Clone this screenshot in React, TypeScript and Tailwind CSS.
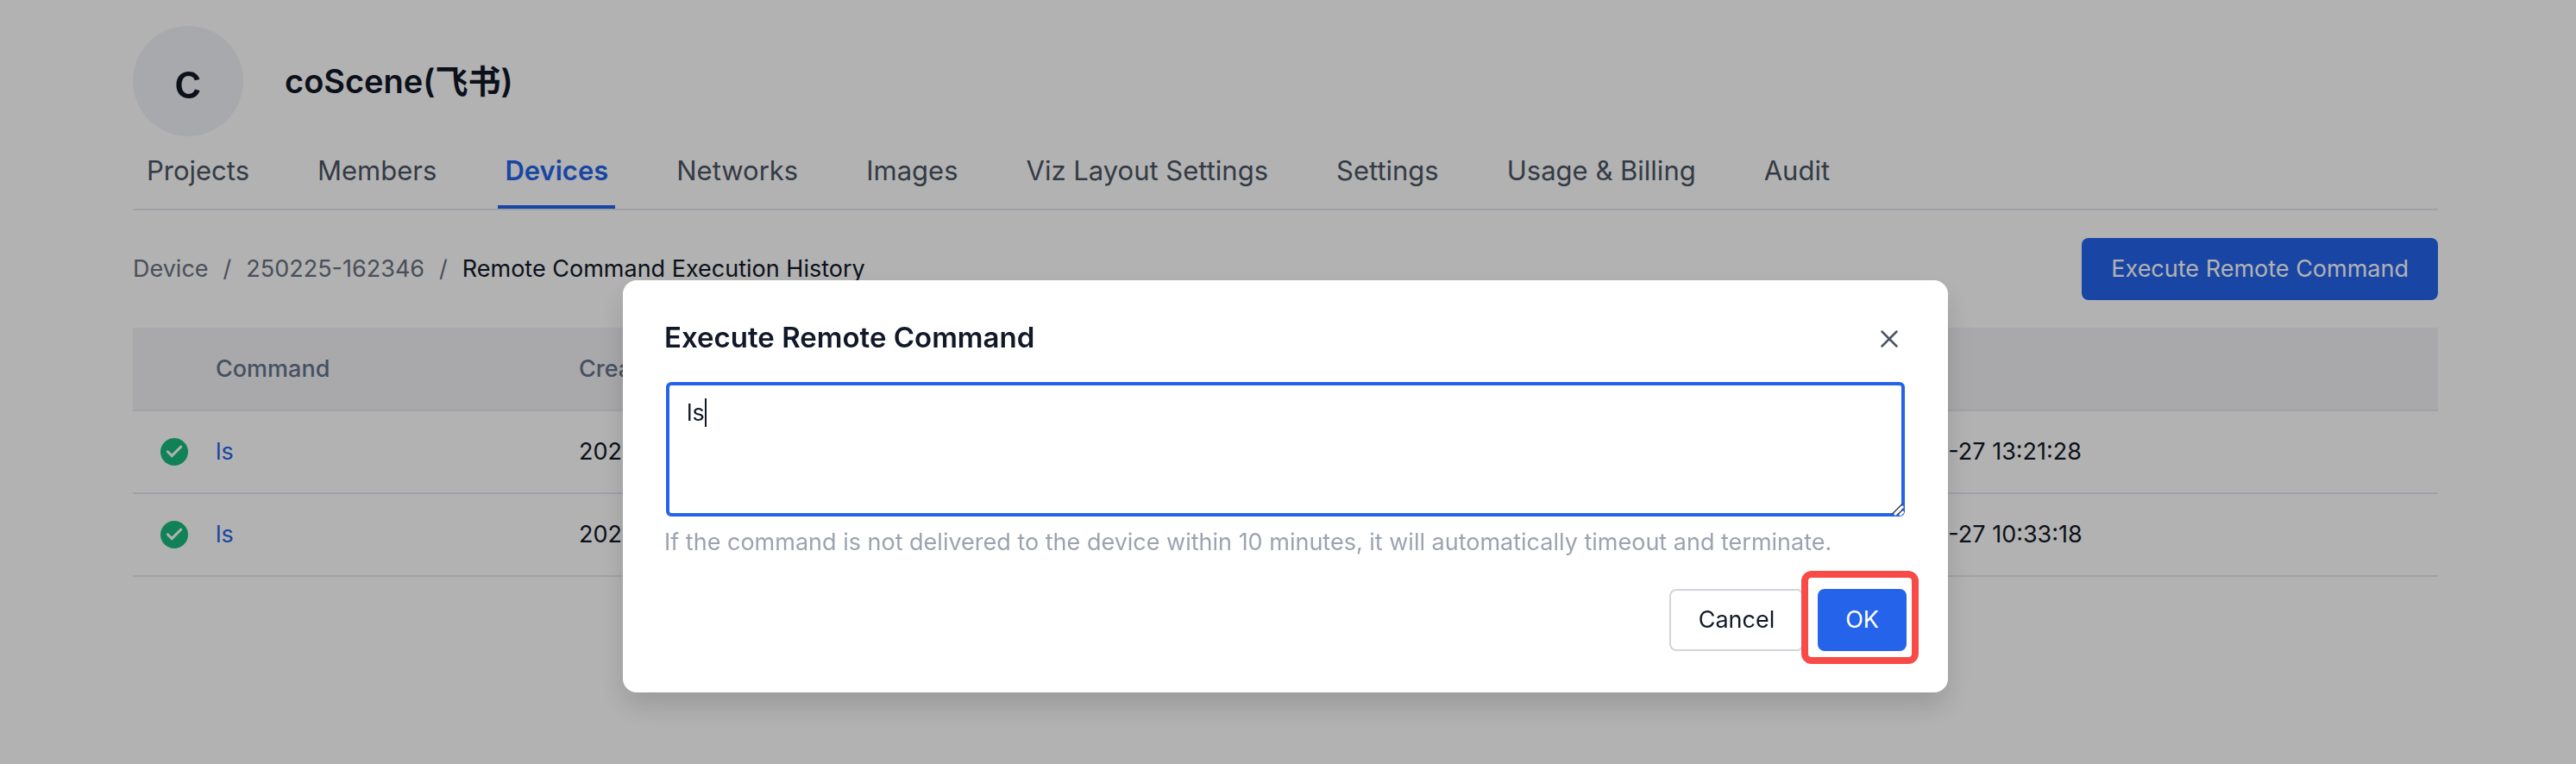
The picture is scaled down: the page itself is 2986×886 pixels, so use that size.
import React from "react";

const tabs = [
  "Projects",
  "Members",
  "Devices",
  "Networks",
  "Images",
  "Viz Layout Settings",
  "Settings",
  "Usage & Billing",
  "Audit",
];

const rows = [
  { command: "ls", created: "2025-02-27 13:21:26", ended: "2025-02-27 13:21:28" },
  { command: "ls", created: "2025-02-27 10:33:16", ended: "2025-02-27 10:33:18" },
];

function SuccessIcon() {
  return (
    <svg viewBox="0 0 32 32" className="block size-8" role="img" aria-label="Succeeded">
      <circle cx="16" cy="16" r="16" fill="#19bb7e" />
      <path
        d="M8.4 15.8 13.3 20.6 23.8 10"
        fill="none"
        stroke="#fff"
        strokeWidth="3"
        strokeLinecap="round"
        strokeLinejoin="miter"
      />
    </svg>
  );
}

function Header() {
  return (
    <header>
      <div className="flex items-center gap-12">
        <div className="flex size-32 items-center justify-center rounded-full bg-[#f1f2f6] text-[56px] leading-none font-medium">
          c
        </div>
        <h1 className="text-[38px] leading-[56px] font-semibold">coScene(飞书)</h1>
      </div>
      <nav className="flex gap-[63px] border-b-2 border-slate-200 pl-2">
        {tabs.map((tab) => (
          <a
            key={tab}
            href="#"
            className={
              tab === "Devices"
                ? "border-b-4 border-[#2563eb] px-2 py-4 text-[31px] leading-[48px] font-semibold text-[#2563eb]"
                : "border-b-4 border-transparent px-2 py-4 text-[31px] leading-[48px] text-[#4b5563]"
            }
          >
            {tab}
          </a>
        ))}
      </nav>
    </header>
  );
}

function Toolbar() {
  return (
    <div className="flex items-center justify-between py-8 text-[27px] leading-[44px]">
      <nav aria-label="Breadcrumb" className="flex gap-[17px] text-[#6b7280]">
        <a href="#">Device</a>
        <span>/</span>
        <a href="#">250225-162346</a>
        <span>/</span>
        <span className="text-[#111827]">Remote Command Execution History</span>
      </nav>
      <button className="h-[72px] rounded-lg bg-[#2563eb] px-[34px] text-white">Execute Remote Command</button>
    </div>
  );
}

function HistoryTable() {
  return (
    <table className="w-full table-fixed text-left text-[27px] leading-[44px]">
      <thead>
        <tr className="h-24 border-b-2 border-slate-200 bg-[#f2f2f5] text-[#64748b]">
          <th className="w-24" />
          <th className="w-[421px] font-medium">Command</th>
          <th className="font-medium">Created</th>
          <th className="w-[680px] font-medium">Ended</th>
        </tr>
      </thead>
      <tbody>
        {rows.map((row) => (
          <tr key={row.ended} className="h-24 border-b-2 border-slate-200">
            <td className="pl-8">
              <SuccessIcon />
            </td>
            <td>
              <a href="#" className="text-[#2563eb]">
                {row.command}
              </a>
            </td>
            <td>{row.created}</td>
            <td>{row.ended}</td>
          </tr>
        ))}
      </tbody>
    </table>
  );
}

function CommandDialog() {
  return (
    <div className="fixed inset-0 flex items-start justify-center bg-black/30 pt-[325px] pr-[6px]">
      <section
        role="dialog"
        aria-modal="true"
        aria-labelledby="dialog-title"
        className="w-full max-w-[1536px] rounded-2xl bg-white p-12 shadow-[0_16px_32px_rgba(0,0,0,0.14)]"
      >
        <div className="flex h-10 items-start justify-between">
          <h2 id="dialog-title" className="text-[33px] leading-9 font-semibold">
            Execute Remote Command
          </h2>
          <button aria-label="Close" className="text-[#4b5563]">
            <svg viewBox="0 0 40 40" className="block size-10" fill="none" stroke="currentColor">
              <path d="M11.5 11.5 28.5 28.5M28.5 11.5 11.5 28.5" strokeWidth="2.5" strokeLinecap="round" />
            </svg>
          </button>
        </div>
        <div className="relative mx-[2px] mt-[30px]">
          <textarea
            aria-label="Command"
            aria-describedby="command-hint"
            defaultValue="ls"
            className="block h-[156px] w-full resize-none rounded-md border-4 border-[#2563eb] px-5 py-3 text-[27px] leading-[40px] outline-none"
          />
          <span className="absolute top-[19px] left-[45px] h-[33px] w-[2px] bg-[#111827]" />
          <svg viewBox="0 0 16 16" className="absolute right-[1px] bottom-[1px] size-4" fill="none">
            <path d="M5 15 15 5M11 15.5 15.5 11" stroke="#fff" strokeWidth="3" />
            <path d="M2 14.5 14.5 2M9 14.5 14.5 9" stroke="#374151" strokeWidth="1.5" />
          </svg>
        </div>
        <p id="command-hint" className="mt-2 text-[27px] leading-[44px] text-[#9ca3af]">
          If the command is not delivered to the device within 10 minutes, it will automatically timeout and terminate.
        </p>
        <div className="mt-8 flex justify-end gap-4 text-[27px] leading-[44px]">
          <button className="h-[72px] rounded-lg border-2 border-[#d1d5db] px-8">Cancel</button>
          <div className="relative">
            <button className="h-[72px] rounded-lg bg-[#2563eb] px-8 text-white">OK</button>
            <span className="pointer-events-none absolute -top-[21px] -right-[14px] -bottom-[15px] -left-[19px] rounded-xl border-8 border-[#f84a46]" />
          </div>
        </div>
      </section>
    </div>
  );
}

export default function App() {
  return (
    <div className="min-h-screen bg-white font-['Inter','Noto_Sans_CJK_SC',sans-serif] text-[#111827]">
      <main className="pt-[30px] pr-[160px] pl-[154px]">
        <Header />
        <Toolbar />
        <HistoryTable />
      </main>
      <CommandDialog />
    </div>
  );
}
